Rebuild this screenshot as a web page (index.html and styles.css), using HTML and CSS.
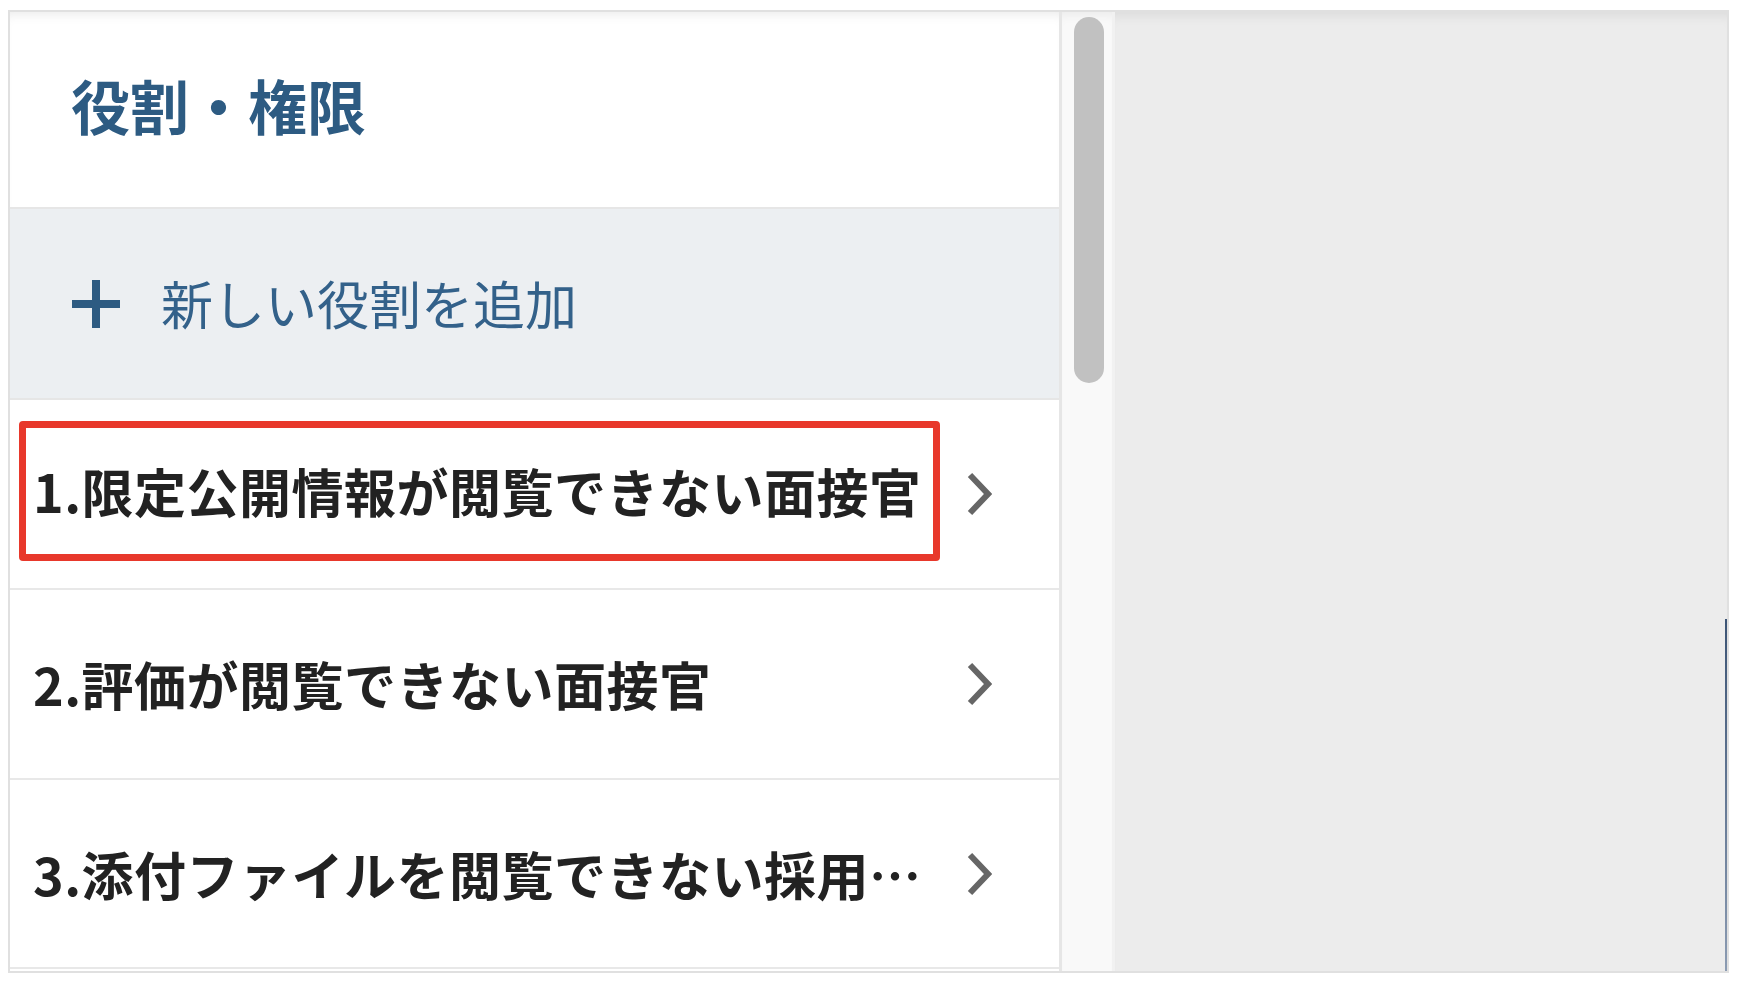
FILE: index.html
```html
<!DOCTYPE html>
<html lang="ja">
<head>
    <meta charset="UTF-8">
    <meta name="viewport" content="width=device-width, initial-scale=1.0">
    <title>役割・権限</title>
    <link rel="stylesheet" href="styles.css">
</head>
<body>
    <div class="frame">
        <!-- Role list -->
        <div class="role-panel">
            <div class="panel-header">
                <h1>役割・権限</h1>
            </div>

            <div class="add-row">
                <svg class="plus-icon" width="48" height="48" viewBox="0 0 48 48">
                    <rect x="0" y="20" width="48" height="8" fill="#2d5b82"/>
                    <rect x="20" y="0" width="8" height="48" fill="#2d5b82"/>
                </svg>
                <span>新しい役割を追加</span>
            </div>

            <div class="role-row marked">
                <div class="role-name"><span class="highlight">1.限定公開情報が閲覧できない面接官</span></div>
                <svg class="chevron" width="26" height="46" viewBox="0 0 26 46">
                    <polyline points="4,4 22,23 4,42" fill="none" stroke="#666" stroke-width="6"/>
                </svg>
            </div>

            <div class="role-row">
                <div class="role-name">2.評価が閲覧できない面接官</div>
                <svg class="chevron" width="26" height="46" viewBox="0 0 26 46">
                    <polyline points="4,4 22,23 4,42" fill="none" stroke="#666" stroke-width="6"/>
                </svg>
            </div>

            <div class="role-row">
                <div class="role-name">3.添付ファイルを閲覧できない採用担当者</div>
                <svg class="chevron" width="26" height="46" viewBox="0 0 26 46">
                    <polyline points="4,4 22,23 4,42" fill="none" stroke="#666" stroke-width="6"/>
                </svg>
            </div>
        </div>

        <!-- Scrollbar -->
        <div class="scroll-track">
            <div class="scroll-thumb"></div>
        </div>

        <!-- Detail pane (empty) -->
        <div class="detail-pane">
            <div class="pane-body"></div>
            <div class="pane-edge">
                <div class="edge-line"></div>
            </div>
        </div>
    </div>
</body>
</html>
```

FILE: styles.css
```css
body {
    margin: 0;
    background-color: #fff;
    font-family: "Noto Sans CJK JP", "Noto Sans", sans-serif;
}
.frame {
    display: flex;
    width: 1721px;
    height: 963px;
    margin: 10px 0 0 8px;
    border: 2px solid #e0e0e0;
    box-sizing: border-box;
}
.role-panel {
    width: 1052px;
    flex-shrink: 0;
    border-right: 3px solid #e6e6e6;
    box-sizing: border-box;
    background: #fff;
    display: flex;
    flex-direction: column;
}
.panel-header {
    height: 197px;
    box-sizing: border-box;
    border-bottom: 2px solid #e6e6e6;
    display: flex;
    align-items: center;
    padding: 0 0 8px 61px;
    box-shadow: inset 0 10px 12px -8px rgba(0,0,0,0.09);
}
h1 {
    margin: 0;
    font-size: 59px;
    font-weight: bold;
    color: #2d5b82;
    line-height: 1.2;
}
.add-row {
    height: 191px;
    box-sizing: border-box;
    border-bottom: 2px solid #e6e6e6;
    background-color: #eceff2;
    display: flex;
    align-items: center;
    padding-left: 62px;
    gap: 41px;
    font-size: 52px;
    color: #33618a;
}
.add-row span {
    line-height: 1.2;
}
.role-row {
    height: 190px;
    box-sizing: border-box;
    border-bottom: 2px solid #e8e8e8;
    display: flex;
    align-items: center;
    padding: 0 67px 0 23px;
    gap: 40px;
}
.role-row:last-child {
    height: 189px;
}
.role-name {
    flex: 1;
    min-width: 0;
    font-size: 52px;
    font-weight: bold;
    color: #222;
    line-height: 1.5;
    letter-spacing: 0.5px;
    white-space: nowrap;
    overflow: hidden;
    text-overflow: ellipsis;
}
.role-row.marked .role-name {
    overflow: visible;
    margin-top: -6px;
}
.highlight {
    display: inline-block;
    border: 7px solid #e8382b;
    border-radius: 4px;
    padding: 24px 11px 24px 7px;
    margin-left: -14px;
}
.chevron {
    flex-shrink: 0;
}
.scroll-track {
    width: 53px;
    flex-shrink: 0;
    box-sizing: border-box;
    background: #f9f9f9;
    border-right: 3px solid #f1f1f1;
    padding: 5px 0 0 12px;
    box-shadow: inset 0 10px 12px -8px rgba(0,0,0,0.07);
}
.scroll-thumb {
    width: 30px;
    height: 366px;
    border-radius: 15px;
    background: #c1c1c1;
}
.detail-pane {
    flex: 1;
    display: flex;
    background: #ececec;
    box-shadow: inset 0 12px 12px -8px rgba(0,0,0,0.07);
}
.pane-body {
    flex: 1;
}
.pane-edge {
    width: 2px;
    display: flex;
    flex-direction: column;
}
.edge-line {
    flex: 1;
    margin-top: 607px;
    background: linear-gradient(#3c5475, #8b9bb2);
}
```
